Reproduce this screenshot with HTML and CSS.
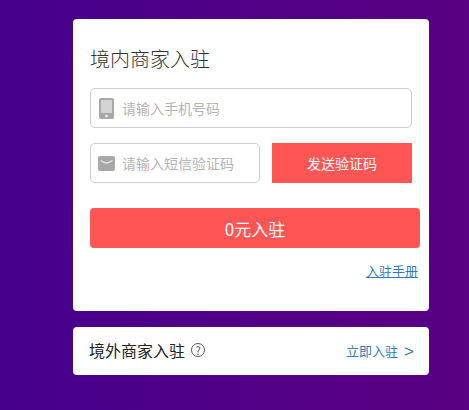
FILE: index.html
```html
<!DOCTYPE html>
<html lang="zh-CN">
<head>
<meta charset="UTF-8">
<meta name="viewport" content="width=device-width, initial-scale=1.0">
<title>商家入驻</title>
<link rel="stylesheet" href="styles.css">
</head>
<body>

<div class="wrapper">
    <div class="card login-card">
        <h2 class="card-title">境内商家入驻</h2>

        <div class="field field-full">
            <svg class="field-icon" width="15" height="21" viewBox="0 0 15 21">
                <rect width="15" height="21" rx="2" fill="#a8a8a8"/>
                <rect x="2" y="2" width="11" height="13" fill="#d4d4d4"/>
                <circle cx="7.500" cy="18" r="1.300" fill="#eee"/>
            </svg>
            <span class="placeholder">请输入手机号码</span>
        </div>

        <div class="code-row">
            <div class="field field-code">
                <svg class="field-icon mail" width="17" height="15" viewBox="0 0 17 15">
                    <rect width="17" height="15" rx="2" fill="#a8a8a8"/>
                    <path fill="none" stroke="#e4e4e4" stroke-width="1.300" d="M2.500 4.500c3 1.800 4.500 2.500 6 2.500s3-.7 6-2.500"/>
                </svg>
                <span class="placeholder">请输入短信验证码</span>
            </div>
            <button class="send-btn">发送验证码</button>
        </div>

        <button class="submit-btn">0元入驻</button>

        <div class="manual"><a href="#">入驻手册</a></div>
    </div>

    <div class="card abroad-card">
        <div class="abroad-left">
            <span>境外商家入驻</span>
            <span class="help">?</span>
        </div>
        <a href="#" class="abroad-link">立即入驻<span class="arrow">&gt;</span></a>
    </div>
</div>

</body>
</html>
```

FILE: styles.css
```css
html, body {
    height: 100%;
}
body {
    margin: 0;
    padding: 0;
    overflow: hidden;
    font-family: "Noto Sans CJK SC", "Liberation Sans", sans-serif;
    background: linear-gradient(90deg, #46008c 0%, #5a0082 100%);
}
.wrapper {
    width: 356px;
    margin-left: 73px;
    padding-top: 19px;
}
.card {
    background-color: #fff;
    border-radius: 4px;
}
.login-card {
    height: 292px;
    box-sizing: border-box;
    padding: 28px 9px 0 17px;
}
.card-title {
    margin: 0;
    font-size: 20px;
    line-height: 24px;
    font-weight: 300;
    color: #333;
}
.field {
    display: flex;
    align-items: center;
    height: 40px;
    box-sizing: border-box;
    border: 1px solid #ccc;
    border-radius: 5px;
    padding-left: 8px;
}
.field-full {
    width: 322px;
    margin-top: 17px;
}
.field-code {
    width: 170px;
}
.field-icon {
    flex: none;
    margin-right: 8px;
}
.field-icon.mail {
    margin-left: -1px;
    margin-right: 7px;
}
.placeholder {
    font-size: 14px;
    color: #b4b4b4;
}
.code-row {
    display: flex;
    gap: 12px;
    margin-top: 15px;
}
.send-btn {
    width: 140px;
    height: 40px;
    border: none;
    padding: 0;
    background-color: #f55;
    color: #fff;
    font-family: inherit;
    font-size: 14px;
}
.submit-btn {
    display: block;
    width: 330px;
    height: 40px;
    margin-top: 25px;
    border: none;
    border-radius: 4px;
    padding: 0;
    background-color: #f55;
    color: #fff;
    font-family: inherit;
    font-size: 17px;
}
.manual {
    margin-top: 14px;
    text-align: right;
    padding-right: 2px;
    font-size: 13px;
    line-height: 18px;
}
.manual a {
    color: #337ab7;
}
.abroad-card {
    display: flex;
    justify-content: space-between;
    align-items: center;
    height: 48px;
    margin-top: 16px;
    padding: 0 15px 2px 16px;
    box-sizing: border-box;
    font-size: 16px;
    color: #222;
}
.abroad-left {
    display: flex;
    align-items: center;
    gap: 6px;
}
.help {
    width: 12px;
    height: 12px;
    border: 1px solid #555;
    border-radius: 50%;
    font-size: 11px;
    line-height: 12px;
    text-align: center;
    color: #555;
}
.abroad-link {
    display: flex;
    align-items: center;
    color: #337ab7;
    font-size: 13px;
    text-decoration: none;
}
.arrow {
    margin-left: 6px;
    margin-top: 3px;
    font-family: "Liberation Sans", sans-serif;
    font-size: 17px;
    line-height: 18px;
}
```
